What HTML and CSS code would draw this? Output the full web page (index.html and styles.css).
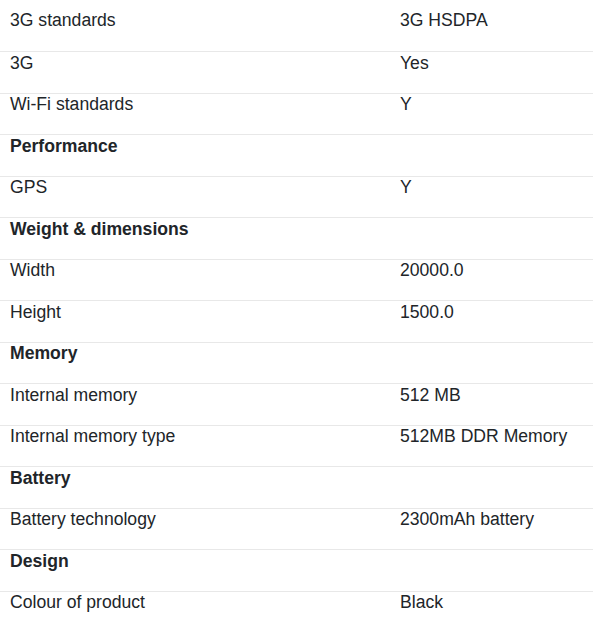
FILE: index.html
```html
<!DOCTYPE html>
<html>
<head>
<meta charset="utf-8">
<link rel="stylesheet" href="styles.css">
</head>
<body>
<div class="specs">
  <div class="row"><div class="label">3G standards</div><div class="value">3G HSDPA</div></div>
  <div class="row"><div class="label">3G</div><div class="value">Yes</div></div>
  <div class="row"><div class="label">Wi-Fi standards</div><div class="value">Y</div></div>
  <div class="row heading"><div class="label">Performance</div><div class="value"></div></div>
  <div class="row"><div class="label">GPS</div><div class="value">Y</div></div>
  <div class="row heading"><div class="label">Weight &amp; dimensions</div><div class="value"></div></div>
  <div class="row"><div class="label">Width</div><div class="value">20000.0</div></div>
  <div class="row"><div class="label">Height</div><div class="value">1500.0</div></div>
  <div class="row heading"><div class="label">Memory</div><div class="value"></div></div>
  <div class="row"><div class="label">Internal memory</div><div class="value">512 MB</div></div>
  <div class="row"><div class="label">Internal memory type</div><div class="value">512MB DDR Memory</div></div>
  <div class="row heading"><div class="label">Battery</div><div class="value"></div></div>
  <div class="row"><div class="label">Battery technology</div><div class="value">2300mAh battery</div></div>
  <div class="row heading"><div class="label">Design</div><div class="value"></div></div>
  <div class="row"><div class="label">Colour of product</div><div class="value">Black</div></div>
</div>
</body>
</html>
```
FILE: styles.css
```css
html, body {
  margin: 0;
  padding: 0;
  background: #fff;
}
body {
  font-family: "Liberation Sans", Arial, sans-serif;
  font-size: 17.6px;
  color: #212529;
}
.specs {
  padding-top: 9.5px;
}
.row {
  display: grid;
  grid-template-columns: 390px 1fr;
  height: 41.5px;
  box-sizing: border-box;
  border-top: 1px solid #e8e8e8;
}
.row:first-child {
  border-top: none;
}
.label, .value {
  padding: 0.5px 10px 0;
}
.heading .label {
  font-weight: bold;
}
```
